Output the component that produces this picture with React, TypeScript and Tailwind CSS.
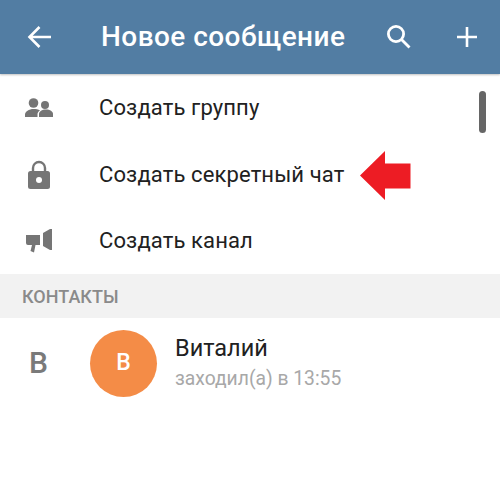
import React from 'react';

const rowText = "text-[22px] leading-none tracking-[0.12px] text-[#212121]";

const GroupIcon = () => (
  <svg width="30" height="22" viewBox="0 0 30 22" fill="#757575">
    <circle cx="8.500" cy="6" r="4.800" />
    <circle cx="20" cy="8" r="4" />
    <path d="M0 20v-2.500c0-3 4-5.500 8.500-5.500 2.500 0 4.800.5 6.500 1.400-1.700 1-2.500 2.300-2.500 3.600v3H0z" />
    <path d="M14 20v-3c0-2.500 3-4.500 7-4.500s7 2 7 4.500v3H14z" />
  </svg>
);

const LockIcon = () => (
  <svg className="ml-[2px]" width="24" height="30" viewBox="0 0 24 30">
    <path d="M6 12V8a6 6 0 0 1 12 0v4" fill="none" stroke="#757575" strokeWidth="2.400" />
    <rect x="1" y="11" width="22" height="18" rx="2.500" fill="#757575" />
    <circle cx="12" cy="20" r="3" fill="#fff" />
  </svg>
);

const MegaphoneIcon = () => (
  <svg width="28" height="26" viewBox="0 0 28 26" fill="#757575">
    <path d="M1 7h14v10H10.500l-1.500 7.500-3.500-1.500 1.500-6H3a2 2 0 0 1-2-2V7z" />
    <path d="M18 5l7-4h2v21h-2l-7-4V5z" />
  </svg>
);

const ActionRow = ({ icon, label, height }: { icon: React.ReactNode; label: string; height: string }) => (
  <div className={`flex items-center ${height}`}>
    <div className="w-[99px] pl-[25px] flex items-center shrink-0">{icon}</div>
    <span className={rowText}>{label}</span>
  </div>
);

export default function App() {
  return (
    <div className="relative w-[500px] h-[481px] overflow-hidden bg-white font-['Roboto',sans-serif]">
      <header className="h-[74px] bg-[#527da3] flex items-center shadow-[0_1px_2px_rgba(0,0,0,0.25)] relative">
        <div className="w-[101px] pl-[27px] shrink-0">
          <svg width="25" height="24" viewBox="0 0 25 24" fill="none" stroke="#fff" strokeWidth="2.600">
            <path d="M24 12H3M12.500 2 2.500 12l10 10" />
          </svg>
        </div>
        <h1 className="text-[28px] leading-none font-medium text-white tracking-[0.45px]">Новое сообщение</h1>
        <div className="ml-auto flex items-center">
          <svg width="26" height="26" viewBox="0 0 26 26" fill="none" stroke="#fff" strokeWidth="2.800">
            <circle cx="10" cy="10" r="7.600" />
            <path d="m15.500 15.500 8 8" />
          </svg>
          <svg className="ml-[44px] mr-[22px]" width="22" height="22" viewBox="0 0 22 22" fill="none" stroke="#fff" strokeWidth="2.600">
            <path d="M11 1v20M1 11h20" />
          </svg>
        </div>
      </header>

      <ActionRow icon={<GroupIcon />} label="Создать группу" height="h-[67px]" />
      <ActionRow icon={<LockIcon />} label="Создать секретный чат" height="h-[67px]" />
      <ActionRow icon={<MegaphoneIcon />} label="Создать канал" height="h-[66px]" />

      <div className="h-[44px] bg-[#f2f2f2] flex items-center pl-[22px] text-[18px] font-medium text-[#8a8a8a]">
        КОНТАКТЫ
      </div>

      <div className="flex items-center h-[90px]">
        <div className="w-[90px] pl-[29px] text-[30px] leading-none font-medium text-[#7a7a7a] shrink-0">В</div>
        <div className="w-[67px] h-[67px] rounded-full bg-[#f48c47] flex items-center justify-center text-white text-[23px] font-medium shrink-0">
          В
        </div>
        <div className="ml-[18px] flex flex-col">
          <span className="text-[23.500px] leading-[26px] text-[#212121] -mt-[1px]">Виталий</span>
          <span className="text-[19.300px] leading-[24px] mt-[6px] text-[#a8a8a8]">заходил(а) в 13:55</span>
        </div>
      </div>

      {/* scrollbar and the red pointer sit over the list */}
      <div className="absolute left-[479px] top-[91px] w-[7px] h-[42px] rounded-full bg-[#666666]" />
      <svg className="absolute left-[360px] top-[150px]" width="51" height="51" viewBox="0 0 51 51">
        <path d="M0 25.500 25 1v12.500h25.500v25H25V50z" fill="#ed1c24" />
      </svg>
    </div>
  );
}
